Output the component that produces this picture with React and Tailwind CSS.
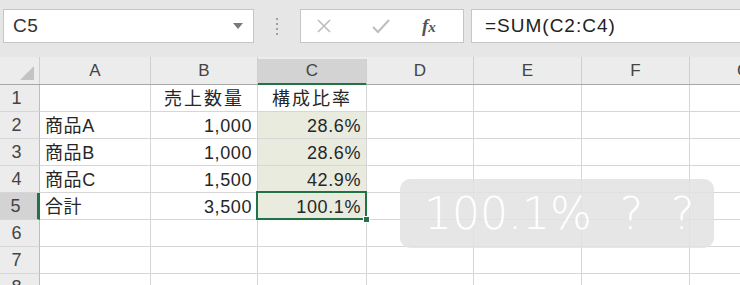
import React from 'react';

const cols = [
  { key: 'A', w: 'w-[111px]' },
  { key: 'B', w: 'w-[107px]' },
  { key: 'C', w: 'w-[109px]' },
  { key: 'D', w: 'w-[107px]' },
  { key: 'E', w: 'w-[108px]' },
  { key: 'F', w: 'w-[108px]' },
  { key: 'G', w: 'w-[108px]' },
];

const rows = [
  { n: 1, A: '', B: '売上数量', C: '構成比率', head: true },
  { n: 2, A: '商品A', B: '1,000', C: '28.6%' },
  { n: 3, A: '商品B', B: '1,000', C: '28.6%' },
  { n: 4, A: '商品C', B: '1,500', C: '42.9%' },
  { n: 5, A: '合計', B: '3,500', C: '100.1%' },
  { n: 6 },
  { n: 7 },
  { n: 8 },
];

const font = "font-['Liberation_Sans','Noto_Sans_CJK_JP',sans-serif]";

const Cell = ({ col, row }) => {
  const v = row[col.key] || '';
  const isC = col.key === 'C';
  const filled = isC && row.n >= 2 && row.n <= 5;
  const selected = isC && row.n === 5;
  let align = 'justify-start pl-[5px]';
  if (row.head) align = 'justify-center';
  else if (col.key === 'B' || col.key === 'C') align = 'justify-end pr-[5px]';
  return (
    <div className={`relative ${col.w} shrink-0 h-full flex items-center ${align} border-r border-b border-[#d6d6d6] ${filled ? 'bg-[#e9ebdf]' : 'bg-white'} text-[18px] text-[#262626] ${row.head ? 'tracking-[2px]' : 'tracking-[0.6px]'} ${selected ? 'z-10' : ''}`}>
      <span className="pt-[2px]">{v}</span>
      {selected && (
        <>
          <div className="absolute -left-[2px] -top-[2px] -right-[1px] -bottom-[1px] border-2 border-[#217346]" />
          <div className="absolute -right-[4px] -bottom-[4px] w-[7px] h-[7px] bg-[#217346] border border-white" />
        </>
      )}
    </div>
  );
};

export default function App() {
  return (
    <div className={`w-[740px] h-[285px] overflow-hidden bg-white relative ${font}`}>
      {/* formula bar */}
      <div className="h-[57px] bg-[#e6e6e6] flex items-start pt-[9px] pl-[3px]">
        <div className="w-[251px] h-[34px] bg-white border border-[#c6c6c6] flex items-center justify-between pl-[9px] pr-[10px]">
          <span className="text-[19px] text-[#333] tracking-[0.5px]">C5</span>
          <svg width="10" height="6" viewBox="0 0 10 6"><path d="M0 0h10L5 6z" fill="#7a7a7a" /></svg>
        </div>
        <div className="w-[46px] h-[34px] flex flex-col items-center justify-center gap-[3px]">
          <span className="w-[2px] h-[2px] bg-[#a0a0a0]" />
          <span className="w-[2px] h-[2px] bg-[#a0a0a0]" />
          <span className="w-[2px] h-[2px] bg-[#a0a0a0]" />
          <span className="w-[2px] h-[2px] bg-[#a0a0a0]" />
        </div>
        <div className="w-[164px] h-[34px] bg-white border border-[#c6c6c6] flex items-center pl-[15px]">
          <svg width="16" height="16" viewBox="0 0 16 16"><path d="M2 2l12 12M14 2L2 14" stroke="#bdbdbd" strokeWidth="1.6" /></svg>
          <svg className="ml-[40px]" width="18" height="16" viewBox="0 0 18 16"><path d="M1 9l5 5L17 2" stroke="#bdbdbd" strokeWidth="2" fill="none" /></svg>
          <span className="ml-[32px] font-['Liberation_Serif',serif] italic font-bold text-[19px] text-[#555]">f<span className="text-[15px]">x</span></span>
        </div>
        <div className="ml-[7px] flex-1 h-[34px] bg-white border border-r-0 border-[#c6c6c6] flex items-center pl-[13px]">
          <span className="text-[19px] text-[#222] tracking-[1px]">=SUM(C2:C4)</span>
        </div>
      </div>

      {/* column headers */}
      <div className="flex h-[28px] bg-[#ececec] border-b border-[#a8a8a8]">
        <div className="w-[40px] shrink-0 h-full border-r border-[#cfcfcf] flex items-end justify-end pr-[5px] pb-[4px]">
          <svg width="14" height="14" viewBox="0 0 14 14"><path d="M14 0v14H0z" fill="#c3c3c3" /></svg>
        </div>
        {cols.map(c => (
          <div key={c.key} className={`${c.w} shrink-0 h-full flex items-center justify-center border-r border-[#cfcfcf] text-[17px] text-[#444] ${c.key === 'C' ? 'bg-[#d3d3d3] border-b-[3px] border-b-[#217346] mt-[2px]' : ''}`}>
            {c.key}
          </div>
        ))}
      </div>

      {/* rows */}
      {rows.map(r => (
        <div key={r.n} className="flex h-[27px]">
          <div className={`w-[40px] shrink-0 h-full flex items-center justify-center pr-[6px] border-b border-[#d6d6d6] text-[18px] text-[#444] ${r.n === 5 ? 'bg-[#d3d3d3] border-r-[3px] border-r-[#217346]' : 'bg-[#ececec] border-r border-r-[#bdbdbd]'}`}>
            {r.n}
          </div>
          {cols.map(c => <Cell key={c.key} col={c} row={r} />)}
        </div>
      ))}

      {/* caption overlay */}
      <div className="absolute z-20 left-[400px] top-[179px] w-[314px] h-[69px] rounded-[10px] bg-[#e2e2e2]/85 flex items-center pl-[24px]">
        <span className="font-['DejaVu_Sans',sans-serif] font-extralight text-[44px] leading-none text-white whitespace-pre">100.1%  ?  ?</span>
      </div>
    </div>
  );
}
